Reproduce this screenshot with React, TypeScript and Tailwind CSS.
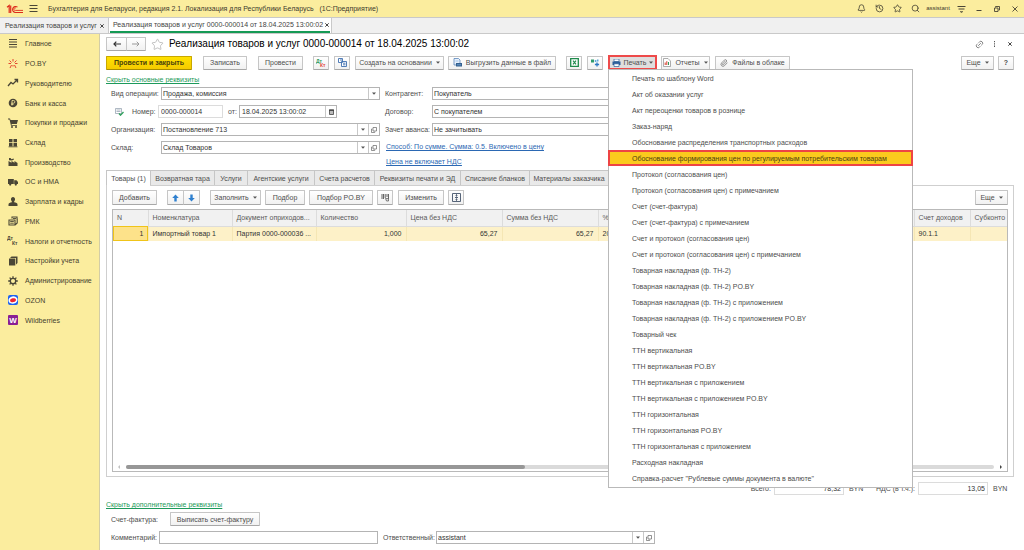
import type { ReactNode } from 'react'
import { Bell, History, Link2, Paperclip, Search, Star } from 'lucide-react'
import clsx from 'clsx'

/* ─── Data ──────────────────────────────────────────────────────────────── */

interface NavItem {
  label: string
  icon: ReactNode
}

const NAV: NavItem[] = [
  {
    label: 'Главное',
    icon: <path d="M2 1.5h8M2 4h8M2 6.5h8M2 9h8" stroke="#4a4636" strokeWidth="1.2" />,
  },
  {
    label: 'PO.BY',
    icon: (
      <path
        d="M6 1v2.5M2.5 2.5l2 2M9.5 2.5l-2 2M1.5 5.5H4M8 5.5h2.5M4.5 7L3 10M7.5 7L9 10M6 7v1.5"
        stroke="#e2452f"
        strokeWidth="1"
      />
    ),
  },
  {
    label: 'Руководителю',
    icon: <path d="M1 9l3-3.5L6 7l4-4M7.5 2.5H10.500V5.500" stroke="#4a4636" strokeWidth="1.3" fill="none" />,
  },
  {
    label: 'Банк и касса',
    icon: (
      <>
        <circle cx="6" cy="6" r="4.3" fill="#4a4636" />
        <path d="M5 8.500V3.500h1.500a1.300 1.300 0 0 1 0 2.700H4.200M4.200 7.400H6.500" stroke="#fbed9e" strokeWidth=".8" fill="none" />
      </>
    ),
  },
  {
    label: 'Покупки и продажи',
    icon: (
      <>
        <path d="M1 1.500h2L3.500 3H11L9.800 7H4.500l.3 1H10v.8H4L2.500 2.400H1z" fill="#4a4636" />
        <circle cx="5" cy="10" r="1" fill="#4a4636" />
        <circle cx="9" cy="10" r="1" fill="#4a4636" />
      </>
    ),
  },
  {
    label: 'Склад',
    icon: <path d="M2 2h3.500v3.200H2zM6.500 2H10v3.200H6.500zM2 6h3.500v3.200H2zM6.500 6H10v3.200H6.500zM1.500 9.400h9v.8h-9z" fill="#4a4636" />,
  },
  {
    label: 'Производство',
    icon: <path d="M1.500 10V5l3 1.800V5l3 1.800V5L10.500 7v3zM2 4.200V2h1.500l1 1.300 2-.8L7 3.600l-2 .8z" fill="#4a4636" />,
  },
  {
    label: 'ОС и НМА',
    icon: (
      <>
        <path d="M1 3h5.800v5H1zM7.200 4.200h2.300L11 6v2H7.200z" fill="#4a4636" />
        <circle cx="3.200" cy="8.600" r="1.100" fill="#4a4636" />
        <circle cx="8.800" cy="8.600" r="1.100" fill="#4a4636" />
      </>
    ),
  },
  {
    label: 'Зарплата и кадры',
    icon: <path d="M6 1a2 2.300 0 0 1 1.200 4.200v1c1.800.3 3.300.8 3.300 2.300V10h-9V8.500c0-1.500 1.500-2 3.300-2.300v-1A2 2.300 0 0 1 6 1z" fill="#4a4636" />,
  },
  {
    label: 'РМК',
    icon: (
      <>
        <path d="M2 5h6v5H2zM5 3.500V2h5v2.500M10.200 3.500V8L8 10" stroke="#4a4636" strokeWidth="1.100" fill="none" />
        <path d="M3.200 6.500h3.600M3.200 8.200h3.600M6 3.500h3" stroke="#4a4636" strokeWidth=".9" />
      </>
    ),
  },
  {
    label: 'Налоги и отчетность',
    icon: (
      <g fill="#4a4636" fontFamily="Liberation Sans" fontWeight="700" fontSize="5">
        <text x="0" y="5">Дт</text>
        <text x="5" y="10">Кт</text>
      </g>
    ),
  },
  {
    label: 'Настройки учета',
    icon: (
      <>
        <path d="M4.500 1.500H10.500V8L9 9.500V3H3z" fill="#4a4636" />
        <path d="M2 3.500h6.300V10.500H2z" fill="#4a4636" />
      </>
    ),
  },
  {
    label: 'Администрирование',
    icon: (
      <>
        <circle cx="6" cy="6" r="2.700" stroke="#4a4636" strokeWidth="1.300" fill="none" />
        <path
          d="M6 1.200v1.800M6 9v1.800M1.200 6H3M9 6h1.800M2.600 2.600l1.200 1.200M8.200 8.200l1.200 1.200M9.400 2.600L8.200 3.800M3.800 8.200L2.600 9.400"
          stroke="#4a4636"
          strokeWidth="1.300"
        />
      </>
    ),
  },
  {
    label: 'OZON',
    icon: (
      <>
        <rect x="1" y="1" width="10" height="10" rx="2" fill="#1e63f0" />
        <ellipse cx="6" cy="6" rx="4.600" ry="3.700" fill="#fff" transform="rotate(-15 6 6)" />
        <ellipse cx="6" cy="6.200" rx="3" ry="1.900" fill="#f0232f" transform="rotate(-15 6 6)" />
      </>
    ),
  },
  {
    label: 'Wildberries',
    icon: (
      <>
        <rect x="1" y="1" width="10" height="10" rx="1" fill="#8a1f94" />
        <text x="6" y="9" fill="#fff" fontFamily="Liberation Sans" fontWeight="700" fontSize="8" textAnchor="middle">W</text>
      </>
    ),
  },
]

const PRINT_FORMS = [
  'Печать по шаблону Word',
  'Акт об оказании услуг',
  'Акт переоценки товаров в рознице',
  'Заказ-наряд',
  'Обоснование распределения транспортных расходов',
  'Обоснование формирования цен по регулируемым потребительским товарам',
  'Протокол (согласования цен)',
  'Протокол (согласования цен) с примечанием',
  'Счет (счет-фактура)',
  'Счет (счет-фактура) с примечанием',
  'Счет и протокол (согласования цен)',
  'Счет и протокол (согласования цен) с примечанием',
  'Товарная накладная (ф. ТН-2)',
  'Товарная накладная (ф. ТН-2) PO.BY',
  'Товарная накладная (ф. ТН-2) с приложением',
  'Товарная накладная (ф. ТН-2) с приложением PO.BY',
  'Товарный чек',
  'ТТН вертикальная',
  'ТТН вертикальная PO.BY',
  'ТТН вертикальная с приложением',
  'ТТН вертикальная с приложением PO.BY',
  'ТТН горизонтальная',
  'ТТН горизонтальная PO.BY',
  'ТТН горизонтальная с приложением',
  'Расходная накладная',
  'Справка-расчет "Рублевые суммы документа в валюте"',
]

const ACTIVE_FORM = 5

const TABS = [
  { label: 'Товары (1)', width: 'w-[45px]' },
  { label: 'Возвратная тара', width: 'w-[64px]' },
  { label: 'Услуги', width: 'w-[33px]' },
  { label: 'Агентские услуги', width: 'w-[67px]' },
  { label: 'Счета расчетов', width: 'w-[60px]' },
  { label: 'Реквизиты печати и ЭД', width: 'w-[86px]' },
  { label: 'Списание бланков', width: 'w-[69px]' },
  { label: 'Материалы заказчика', width: 'w-[79px]' },
]

const COLUMNS = [
  { title: 'N', value: '1', width: 'w-[35px]', right: true },
  { title: 'Номенклатура', value: 'Импортный товар 1', width: 'w-[84px]' },
  { title: 'Документ оприходов...', value: 'Партия 0000-000036 ...', width: 'w-[84px]' },
  { title: 'Количество', value: '1,000', width: 'w-[90px]', right: true },
  { title: 'Цена без НДС', value: '65,27', width: 'w-[96px]', right: true },
  { title: 'Сумма без НДС', value: '65,27', width: 'w-[96px]', right: true },
  { title: '% НДС', value: '20%', width: '' },
  { title: 'Счет доходов', value: '90.1.1', width: 'w-[56px]' },
  { title: 'Субконто', value: '', width: 'w-[37px]' },
]

/* ─── Small parts ───────────────────────────────────────────────────────── */

function Caret() {
  return (
    <svg width="4" height="3" viewBox="0 0 4 3" className="shrink-0">
      <path d="M0 .5h4L2 2.700z" fill="#555" />
    </svg>
  )
}

function OpenIcon() {
  return (
    <svg width="6" height="6" viewBox="0 0 6 6" fill="none" stroke="#666" strokeWidth=".7">
      <path d="M2 .5h3.500V4H2zM1.500 2H.5v3.500h3.200V4.500" />
    </svg>
  )
}

interface BtnProps {
  children?: ReactNode
  className?: string
  label?: string
  tall?: boolean
  primary?: boolean
}

function Btn({ children, className, label, tall, primary }: BtnProps) {
  return (
    <button
      type="button"
      aria-label={label}
      className={clsx(
        'flex shrink-0 items-center justify-center gap-1 whitespace-nowrap rounded-[1px] border bg-gradient-to-b',
        primary
          ? 'border-[#c9a800] border-b-[#a88c00] from-[#ffe100] to-[#f5cb00] font-bold text-[#4a430c]'
          : 'border-[#c6c6c6] border-b-[#a8a8a8] from-white to-[#f1f1f1]',
        tall ? 'h-[15px]' : 'h-[14px]',
        className,
      )}
    >
      {children}
    </button>
  )
}

interface FieldProps {
  id: string
  value: string
  className?: string
  open?: boolean
}

function SelectField({ id, value, className, open }: FieldProps) {
  return (
    <div className={clsx('flex h-[13px] border border-[#b4b4b4] bg-white', className)}>
      <div className="relative min-w-0 flex-1">
        <select id={id} className="block h-full w-full appearance-none pl-px text-[#333] outline-none">
          <option>{value}</option>
        </select>
        <span className="pointer-events-none absolute inset-y-0 right-0 flex w-[11px] items-center justify-center border-l border-[#c8c8c8]">
          <Caret />
        </span>
      </div>
      {open && (
        <button
          type="button"
          aria-label="Открыть"
          className="flex w-[11px] items-center justify-center border-l border-[#c8c8c8]"
        >
          <OpenIcon />
        </button>
      )}
    </div>
  )
}

function TextField({ id, value, className }: FieldProps) {
  return (
    <input
      id={id}
      defaultValue={value}
      className={clsx('h-[13px] min-w-0 border px-[2px] text-[#333] outline-none', className)}
    />
  )
}

/* ─── Window header ─────────────────────────────────────────────────────── */

function TitleBar() {
  return (
    <header className="flex h-[17px] items-center bg-[#fbed9e] text-[#3c3a2e]">
      <svg width="17" height="10" viewBox="0 0 17 10" className="ml-[6px]" fill="none" stroke="#dd2a1b">
        <path d="M1 3.200L3.200 1.500V9M4.700 1.500V9" strokeWidth="1.200" />
        <path d="M11.500 3.200A3 3 0 1 0 9.500 8.500H17" strokeWidth="1.100" />
        <path d="M10 4.200a1.300 1.300 0 1 0-.5 2.200H17" strokeWidth=".9" />
      </svg>
      <button type="button" aria-label="Меню" className="ml-[6px]">
        <svg width="9" height="9" viewBox="0 0 9 9" stroke="#4a4636" strokeWidth="1">
          <path d="M.5 1.500h8M.5 4.500h8M.5 7.500h8" />
        </svg>
      </button>
      <span className="ml-[10px] whitespace-nowrap">
        Бухгалтерия для Беларуси, редакция 2.1. Локализация для Республики Беларусь &nbsp; (1С:Предприятие)
      </span>
      <div className="ml-auto flex items-center">
        <button type="button" aria-label="Уведомления" className="flex w-[18px] justify-center">
          <Bell size={9} />
        </button>
        <button type="button" aria-label="История" className="flex w-[18px] justify-center">
          <History size={9} />
        </button>
        <button type="button" aria-label="Избранное" className="flex w-[18px] justify-center">
          <Star size={9} />
        </button>
        <button type="button" aria-label="Поиск" className="flex w-[18px] justify-center">
          <Search size={9} />
        </button>
        <span className="w-[28px] text-center text-[6px]">assistant</span>
        <button type="button" aria-label="Настройки" className="flex w-[18px] justify-center">
          <svg width="9" height="8" viewBox="0 0 9 8" stroke="#4a4636">
            <path d="M.5 1.500h8M1.500 4h6" />
            <path d="M3 6.500h3L4.500 7.700z" strokeWidth=".4" fill="#4a4636" />
          </svg>
        </button>
        <button type="button" aria-label="Свернуть" className="flex w-[18px] justify-center">
          <svg width="6" height="6" viewBox="0 0 6 6" stroke="#4a4636">
            <path d="M.5 4.500h5" />
          </svg>
        </button>
        <button type="button" aria-label="Развернуть" className="flex w-[18px] justify-center">
          <svg width="6" height="6" viewBox="0 0 6 6" stroke="#4a4636" fill="none">
            <path d="M.5 2h3.500v3.500H.5zM1.500 1.500V.5h4V4H4.500" strokeWidth=".9" />
          </svg>
        </button>
        <button type="button" aria-label="Закрыть" className="flex w-[18px] justify-center">
          <svg width="6" height="6" viewBox="0 0 6 6" stroke="#4a4636" strokeWidth=".9">
            <path d="M.5 .5l5 5M5.500 .5l-5 5" />
          </svg>
        </button>
      </div>
    </header>
  )
}

function CloseMark() {
  return (
    <svg width="4" height="4" viewBox="0 0 4 4" stroke="#444" strokeWidth="1">
      <path d="M.3 .3l3.400 3.400M3.700 .3L.3 3.700" />
    </svg>
  )
}

function WindowTabs() {
  return (
    <div className="flex h-[17px] whitespace-nowrap border-y border-[#c9c9c9] bg-[#f0f0f0] text-[#444]">
      <div className="flex w-[109px] items-center justify-between border-r border-[#c9c9c9] pl-[5px] pr-1">
        <span>Реализация товаров и услуг</span>
        <button type="button" aria-label="Закрыть вкладку"><CloseMark /></button>
      </div>
      <div className="flex w-[223px] border-r border-[#c9c9c9] bg-white px-px">
        <div className="flex flex-1 items-center justify-between border-b-2 border-[#159a55] pl-[3px] pr-px">
          <span>Реализация товаров и услуг 0000-000014 от 18.04.2025 13:00:02</span>
          <button type="button" aria-label="Закрыть вкладку"><CloseMark /></button>
        </div>
      </div>
    </div>
  )
}

function Sidebar() {
  return (
    <nav className="w-[100px] shrink-0 border-r border-[#d3cda6] bg-[#fbed9e]">
      <ul className="grid h-[296px] auto-rows-fr">
        {NAV.map((item) => (
          <li key={item.label} className="flex">
            <a href="#" className="flex items-center gap-[6px] whitespace-nowrap pl-[7px] text-[#45412f]">
              <svg width="12" height="12" viewBox="0 0 12 12" fill="none">
                {item.icon}
              </svg>
              {item.label}
            </a>
          </li>
        ))}
      </ul>
    </nav>
  )
}

/* ─── Print menu ────────────────────────────────────────────────────────── */

function PrintMenu() {
  return (
    <div className="relative">
      <button
        type="button"
        aria-expanded="true"
        className="flex h-[15px] w-[49px] items-center justify-center gap-[3px] border-2 border-[#ee4a4a] bg-[#dedede]"
      >
        <svg width="9" height="8" viewBox="0 0 9 8">
          <path d="M2 0h5v2.500H2z" fill="#fff" stroke="#2d5f9a" strokeWidth=".7" />
          <path d="M.5 2.500h8v3.500h-8z" fill="#2d5f9a" />
          <path d="M2 4.800h5v2.700H2z" fill="#fff" stroke="#2d5f9a" strokeWidth=".7" />
        </svg>
        Печать
        <Caret />
      </button>
      <ul
        role="menu"
        className="absolute left-0 top-[14px] z-10 w-[305px] border border-[#b9b9b9] bg-white pb-px"
      >
        {PRINT_FORMS.map((form, i) => (
          <li key={form} role="none" className={clsx(i === ACTIVE_FORM && '-mx-px')}>
            <button
              type="button"
              role="menuitem"
              className={clsx(
                'flex h-4 w-full items-center whitespace-nowrap text-left',
                i === ACTIVE_FORM
                  ? 'border-2 border-[#ee4444] bg-[#fbca1d] pl-[22px] text-[#4a3f10]'
                  : 'pl-[23px]',
              )}
            >
              {form}
            </button>
          </li>
        ))}
      </ul>
    </div>
  )
}

/* ─── Toolbar ───────────────────────────────────────────────────────────── */

function Toolbar() {
  return (
    <div className="mt-1 flex items-center">
      <Btn primary className="w-[86px]">Провести и закрыть</Btn>
      <Btn className="ml-[11px] w-[44px]">Записать</Btn>
      <Btn className="ml-[11px] w-[45px]">Провести</Btn>
      <Btn className="ml-[10px] w-[16px]" label="Дт/Кт">
        <svg width="11" height="10" viewBox="0 0 11 10" fontFamily="Liberation Sans" fontWeight="700" fontSize="5">
          <text x="0" y="4.500" fill="#2f9a5c">Дт</text>
          <text x="4" y="9" fill="#e04a3c">Кт</text>
        </svg>
      </Btn>
      <Btn className="ml-[5px] w-[16px]" label="Структура подчиненности">
        <svg width="9" height="9" viewBox="0 0 9 9" fill="#fff" stroke="#3f6fb0" strokeWidth=".9">
          <path d="M.5 .5h4v4h-4zM3.500 3.500h5v5h-5zM2 2h2M5 5.200h2.500M5 6.800h2.500" />
        </svg>
      </Btn>
      <Btn className="ml-[5px] w-[89px]">
        Создать на основании
        <Caret />
      </Btn>
      <Btn className="ml-1 w-[108px]">
        <svg width="9" height="9" viewBox="0 0 9 9">
          <path d="M1 .5h4.500l1.500 1.500v5H1z" fill="#e8f0fa" stroke="#4577b3" strokeWidth=".7" />
          <path d="M3 5h6v3.500H3z" fill="#34608f" />
          <path d="M2.500 3h3M4 6.800h4" stroke="#7fb2e5" strokeWidth=".7" />
        </svg>
        Выгрузить данные в файл
      </Btn>
      <Btn className="ml-[10px] w-[16px]" label="Excel">
        <svg width="9" height="9" viewBox="0 0 9 9" fill="#fff" stroke="#1f8a4c">
          <path d="M.7 .7h7.600v7.600H.7z" strokeWidth="1.300" />
          <path d="M3 2.700l3 3.600M6 2.700L3 6.300" strokeWidth="1.100" />
        </svg>
      </Btn>
      <Btn className="ml-[5px] w-[16px]" label="Обмен">
        <svg width="10" height="9" viewBox="0 0 10 9">
          <path d="M1 1.500h3v3H1z" fill="#2f9a6c" />
          <path d="M4.800 2h1.600v2H4.800zM7 1.500h1.500v2H7z" fill="#5fa8d8" />
          <path d="M7 4.400v4.200M4.900 6.500h4.200" stroke="#2c78c4" strokeWidth="1.300" />
        </svg>
      </Btn>
      <div className="ml-[5px]">
        <PrintMenu />
      </div>
      <Btn className="ml-1 w-[49px]">
        <svg width="8" height="9" viewBox="0 0 8 9">
          <path d="M.5 .5H5L7.500 3v5.500h-7z" fill="#fff" stroke="#8a8a8a" strokeWidth=".7" />
          <path d="M2.200 7V4.500M3.800 7V3.200" stroke="#d8402f" strokeWidth="1" />
          <path d="M5.500 7V4" stroke="#2f9a5c" strokeWidth="1" />
        </svg>
        Отчеты
        <Caret />
      </Btn>
      <Btn className="ml-[5px] w-[75px]">
        <Paperclip size={8} color="#666" />
        Файлы в облаке
      </Btn>
      <Btn className="ml-auto w-[33px]">
        Еще
        <Caret />
      </Btn>
      <Btn className="ml-1 w-[16px] font-bold">?</Btn>
    </div>
  )
}

/* ─── Document requisites ───────────────────────────────────────────────── */

function Requisites() {
  return (
    <div className="flex h-[83px] pl-[5px]">
      <div className="flex w-[274px] flex-col gap-[5px]">
        <div className="flex items-center">
          <label htmlFor="operation" className="w-[50px] whitespace-nowrap">Вид операции:</label>
          <SelectField id="operation" value="Продажа, комиссия" className="w-[219px]" />
        </div>
        <div className="flex items-center">
          <svg width="9" height="9" viewBox="0 0 9 9" className="ml-1">
            <path d="M.5 1.500h6v5h-6zM1.500 3h4M1.500 4.500h4" fill="#fff" stroke="#8d9bab" strokeWidth=".7" />
            <path d="M4 6.500l1.500 1.700L8.500 5" fill="none" stroke="#2fa05c" strokeWidth="1.300" />
          </svg>
          <label htmlFor="number" className="ml-[8px] w-[26px]">Номер:</label>
          <TextField id="number" value="0000-000014" className="w-[65px] border-[#dcdcdc]" />
          <label htmlFor="date" className="ml-[5px] w-[11px]">от:</label>
          <div className="flex h-[13px] w-[98px] border border-[#b4b4b4]">
            <input
              id="date"
              defaultValue="18.04.2025 13:00:02"
              className="min-w-0 flex-1 px-[2px] text-[#333] outline-none"
            />
            <button
              type="button"
              aria-label="Календарь"
              className="flex w-[11px] items-center justify-center border-l border-[#c8c8c8]"
            >
              <svg width="5" height="6" viewBox="0 0 5 6">
                <path d="M.5 1h4v4.500h-4z" fill="#bbb" stroke="#444" strokeWidth=".8" />
                <path d="M0 1.200h5" stroke="#444" strokeWidth="1.400" />
              </svg>
            </button>
          </div>
        </div>
        <div className="flex items-center">
          <label htmlFor="organization" className="w-[50px]">Организация:</label>
          <SelectField id="organization" value="Постановление 713" className="w-[219px]" open />
        </div>
        <div className="flex items-center">
          <label htmlFor="warehouse" className="w-[50px]">Склад:</label>
          <SelectField id="warehouse" value="Склад Товаров" className="w-[219px]" open />
        </div>
      </div>
      <div className="flex w-[400px] flex-col gap-[5px]">
        <div className="flex items-center">
          <label htmlFor="partner" className="w-[47px]">Контрагент:</label>
          <SelectField id="partner" value="Покупатель" className="flex-1" open />
        </div>
        <div className="flex items-center">
          <label htmlFor="contract" className="w-[47px]">Договор:</label>
          <SelectField id="contract" value="С покупателем" className="flex-1" open />
        </div>
        <div className="flex items-center">
          <label htmlFor="advance" className="w-[47px] whitespace-nowrap">Зачет аванса:</label>
          <SelectField id="advance" value="Не зачитывать" className="flex-1" />
        </div>
        <div className="flex flex-col items-start gap-[6px] pl-px pt-px text-[#2b68b3] underline">
          <a href="#">Способ: По сумме. Сумма: 0.5. Включено в цену</a>
          <a href="#">Цена не включает НДС</a>
        </div>
      </div>
    </div>
  )
}

/* ─── Goods table ───────────────────────────────────────────────────────── */

function GoodsPanel() {
  return (
    <section>
      <div role="tablist" className="flex h-[15px]">
        {TABS.map((tab, i) => (
          <button
            key={tab.label}
            type="button"
            role="tab"
            aria-selected={i === 0}
            className={clsx(
              'shrink-0 whitespace-nowrap border-r border-t border-[#c6c6c6]',
              i === 0 ? 'border-l bg-white' : 'bg-[#e9e9e9]',
              tab.width,
            )}
          >
            {tab.label}
          </button>
        ))}
      </div>
      <div className="flex">
        <div className="w-[44px] border-l border-[#cfcfcf]" />
        <div className="flex-1 border-r border-t border-[#cfcfcf] pt-px" />
      </div>
      <div className="border-x border-b border-[#cfcfcf] px-[5px] pb-1 pt-[3px]">
        <div className="flex items-center">
          <Btn tall className="w-[45px]">Добавить</Btn>
          <Btn tall className="ml-[10px] w-[17px]" label="Вверх">
            <svg width="7" height="8" viewBox="0 0 7 8">
              <path d="M3.500 .5L6.800 4H4.700v3.500H2.300V4H.2z" fill="#2f80cf" />
            </svg>
          </Btn>
          <Btn tall className="-ml-px w-[17px]" label="Вниз">
            <svg width="7" height="8" viewBox="0 0 7 8">
              <path d="M3.500 7.500L6.800 4H4.700V.5H2.300V4H.2z" fill="#2f80cf" />
            </svg>
          </Btn>
          <Btn tall className="ml-[10px] w-[51px]">
            Заполнить
            <Caret />
          </Btn>
          <Btn tall className="ml-1 w-[40px]">Подбор</Btn>
          <Btn tall className="ml-1 w-[64px]">Подбор PO.BY</Btn>
          <Btn tall className="ml-1 w-[16px]" label="Штрихкод">
            <svg width="9" height="9" viewBox="0 0 9 9" stroke="#555">
              <path d="M1 1v5M2.500 1v5M4.200 1v4M6 1v3M7.500 1v5" strokeWidth=".9" />
              <path d="M4.500 5.500h3v2.500h-2z" fill="#ddd" strokeWidth=".7" />
            </svg>
          </Btn>
          <Btn tall className="ml-[5px] w-[46px]">Изменить</Btn>
          <Btn tall className="ml-1 w-[16px]" label="Высота строк">
            <svg width="9" height="9" viewBox="0 0 9 9" fill="none" stroke="#44546a">
              <path d="M.5 .5h8v8h-8z" strokeWidth=".9" />
              <path d="M4.500 1.500v2.200M4.500 5.300v2.200M3 4.500h3" strokeWidth=".9" />
              <path d="M3.500 2.500l1-1 1 1M3.500 6.500l1 1 1-1" strokeWidth=".7" />
            </svg>
          </Btn>
          <Btn tall className="ml-auto w-[33px]">
            Еще
            <Caret />
          </Btn>
        </div>

        <div className="mt-1 flex h-[263px] flex-col justify-between border border-[#b9b9b9]">
          <table className="w-full table-fixed border-collapse">
            <thead>
              <tr className="h-[16px] bg-[#f1f1f1] text-[#5a5a5a]">
                {COLUMNS.map((col) => (
                  <th
                    key={col.title}
                    className={clsx(
                      'whitespace-nowrap border-b border-r border-[#dcdcdc] p-0 pl-1 text-left font-normal last:border-r-0',
                      col.width,
                    )}
                  >
                    {col.title}
                  </th>
                ))}
              </tr>
            </thead>
            <tbody>
              <tr className="h-[15px] bg-[#fdf1c8] text-[#333]">
                {COLUMNS.map((col, i) => (
                  <td
                    key={col.title}
                    className={clsx(
                      'whitespace-nowrap border-r border-[#f5e6b4] p-0 last:border-r-0',
                      col.right ? 'pr-1 text-right' : 'pl-1',
                      i === 0 && 'bg-[#fde28a] outline-1 -outline-offset-1 outline-[#f0c419]',
                    )}
                  >
                    {col.value}
                  </td>
                ))}
              </tr>
            </tbody>
          </table>
          <div className="flex items-center gap-[6px] px-[5px] pb-[2px]">
            <svg width="2" height="4" viewBox="0 0 2 4"><path d="M2 0v4L0 2z" fill="#c0c0c0" /></svg>
            <div className="h-1 flex-1 rounded-full bg-[#dadada]">
              <div className="h-1 w-[46%] rounded-full bg-[#979797]" />
            </div>
            <svg width="2" height="4" viewBox="0 0 2 4"><path d="M0 0v4l2-2z" fill="#444" /></svg>
          </div>
        </div>
      </div>
    </section>
  )
}

/* ─── Footer ────────────────────────────────────────────────────────────── */

function Footer() {
  return (
    <footer>
      <div className="mt-[5px] flex items-center justify-end">
        <label htmlFor="total" className="mr-[3px]">Всего:</label>
        <TextField id="total" value="78,32" className="w-[70px] border-[#dcdcdc] text-right" />
        <span className="ml-[5px] w-[27px]">BYN</span>
        <label htmlFor="vat" className="mr-[3px]">НДС (в т.ч.):</label>
        <TextField id="vat" value="13,05" className="w-[70px] border-[#dcdcdc] text-right" />
        <span className="ml-[5px] w-[21px]">BYN</span>
      </div>
      <a href="#" className="mt-[5px] block w-fit text-[#1d9a5b] underline">Скрыть дополнительные реквизиты</a>
      <div className="mt-[3px] flex items-center pl-[5px]">
        <span className="w-[59px]">Счет-фактура:</span>
        <Btn className="w-[90px]">Выписать счет-фактуру</Btn>
      </div>
      <div className="mt-[5px] flex items-center pb-[6px] pl-[5px]">
        <label htmlFor="comment" className="w-[48px] whitespace-nowrap">Комментарий:</label>
        <TextField id="comment" value="" className="w-[219px] border-[#b4b4b4]" />
        <label htmlFor="responsible" className="ml-[5px] w-[53px] whitespace-nowrap">Ответственный:</label>
        <SelectField id="responsible" value="assistant" className="w-[219px]" open />
      </div>
    </footer>
  )
}

/* ─── Page ──────────────────────────────────────────────────────────────── */

export default function App() {
  return (
    <div className="flex min-h-screen flex-col bg-white font-['Liberation_Sans',Arial,sans-serif] text-[7px] leading-[9px] text-[#4d4d4d]">
      <TitleBar />
      <WindowTabs />
      <div className="flex flex-1">
        <Sidebar />
        <main className="min-w-0 flex-1 pl-[6px] pr-[10px] pt-[3px]">
          <div className="flex items-center">
            <Btn className="w-[21px]" label="Назад">
              <svg width="8" height="6" viewBox="0 0 8 6" fill="none" stroke="#333" strokeWidth="1.200">
                <path d="M8 3H1M3.300 .7L1 3l2.300 2.300" />
              </svg>
            </Btn>
            <Btn className="-ml-px w-[20px]" label="Вперед">
              <svg width="8" height="6" viewBox="0 0 8 6" fill="none" stroke="#999" strokeWidth="1">
                <path d="M0 3h7M4.700 .7L7 3 4.700 5.300" />
              </svg>
            </Btn>
            <button type="button" aria-label="В избранное" className="ml-[5px]">
              <Star size={13} strokeWidth={1.500} color="#b5b5b5" />
            </button>
            <h1 className="ml-[5px] text-[10px] leading-[14px] text-black">
              Реализация товаров и услуг 0000-000014 от 18.04.2025 13:00:02
            </h1>
            <div className="ml-auto flex items-center gap-[9px]">
              <button type="button" aria-label="Ссылка">
                <Link2 size={9} className="-rotate-45" color="#666" />
              </button>
              <button type="button" aria-label="Еще действия">
                <svg width="3" height="6" viewBox="0 0 3 6" fill="#555">
                  <path d="M1 0h1v1.300H1zM1 2.300h1v1.300H1zM1 4.600h1V6H1z" />
                </svg>
              </button>
              <button type="button" aria-label="Закрыть" className="pl-[3px] pr-[2px]"><CloseMark /></button>
            </div>
          </div>
          <Toolbar />
          <a href="#" className="mt-[5px] block w-fit text-[#1d9a5b] underline">Скрыть основные реквизиты</a>
          <div className="mt-[3px]">
            <Requisites />
          </div>
          <GoodsPanel />
          <Footer />
        </main>
      </div>
    </div>
  )
}
